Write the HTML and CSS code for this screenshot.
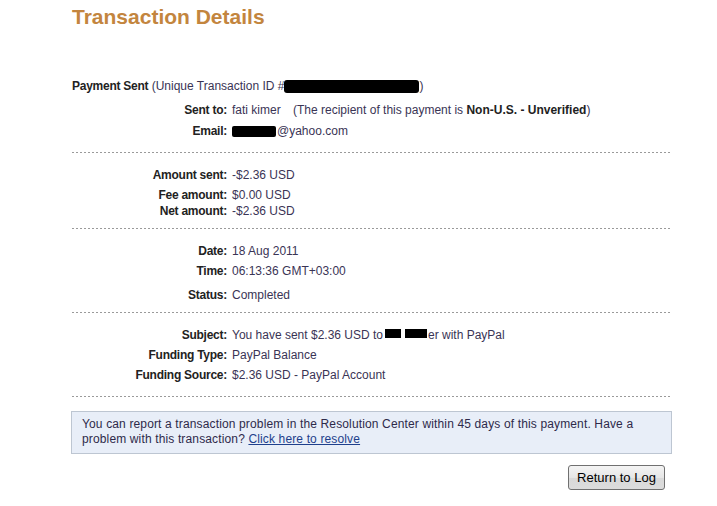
FILE: index.html
```html
<!DOCTYPE html>
<html>
<head>
<meta charset="utf-8">
<link rel="stylesheet" href="styles.css">
</head>
<body>
<div class="page">
  <h1 class="title">Transaction Details</h1>

  <div class="sent-head"><b class="lbl">Payment Sent</b> (Unique Transaction ID #<span class="redact redact-id"></span>)</div>

  <div class="grid s1">
    <div class="row r-sent"><span class="lbl">Sent to:</span><span class="val">fati kimer <span class="spacer"></span>(The recipient of this payment is <b class="strong">Non-U.S. - Unverified</b>)</span></div>
    <div class="row r-email"><span class="lbl">Email:</span><span class="val"><span class="redact redact-mail"></span>@yahoo.com</span></div>
  </div>
  <div class="divider d-13"></div>

  <div class="grid sec">
    <div class="row"><span class="lbl">Amount sent:</span><span class="val">-$2.36 USD</span></div>
    <div class="row r-4"><span class="lbl">Fee amount:</span><span class="val">$0.00 USD</span></div>
    <div class="row r-0"><span class="lbl">Net amount:</span><span class="val">-$2.36 USD</span></div>
  </div>
  <div class="divider d-9"></div>

  <div class="grid sec">
    <div class="row"><span class="lbl">Date:</span><span class="val">18 Aug 2011</span></div>
    <div class="row r-4"><span class="lbl">Time:</span><span class="val">06:13:36 GMT+03:00</span></div>
    <div class="row r-8"><span class="lbl">Status:</span><span class="val">Completed</span></div>
  </div>
  <div class="divider d-9"></div>

  <div class="grid sec">
    <div class="row"><span class="lbl">Subject:</span><span class="val">You have sent $2.36 USD to<span class="redact redact-s1"></span><span class="redact redact-s2"></span>er with PayPal</span></div>
    <div class="row r-4"><span class="lbl">Funding Type:</span><span class="val">PayPal Balance</span></div>
    <div class="row r-4"><span class="lbl">Funding Source:</span><span class="val">$2.36 USD - PayPal Account</span></div>
  </div>
  <div class="divider d-13"></div>

  <div class="notice">You can report a transaction problem in the Resolution Center within 45 days of this payment. Have a problem with this transaction? <a href="#" class="link">Click here to resolve</a></div>

  <div class="actions"><button class="btn">Return to Log</button></div>
</div>
</body>
</html>
```
FILE: styles.css
```css
html, body {
  margin: 0;
  padding: 0;
  background: #ffffff;
}
body {
  font-family: "Liberation Sans", Arial, sans-serif;
  font-size: 12px;
  color: #3a3455;
}
.page {
  margin-left: 71px;
  width: 601px;
}
.title {
  margin: 5px 0 0 1px;
  font-size: 21px;
  line-height: 24px;
  font-weight: bold;
  color: #c3853e;
}
.lbl {
  font-weight: bold;
  color: #222222;
  letter-spacing: -0.25px;
}
.strong {
  font-weight: bold;
  color: #222222;
}
.sent-head {
  margin: 49px 0 0 1px;
  line-height: 16px;
  height: 16px;
  white-space: nowrap;
}
.grid {
  display: flex;
  flex-direction: column;
}
.row {
  display: grid;
  grid-template-columns: 156px 1fr;
  column-gap: 5px;
  line-height: 16px;
  height: 16px;
  white-space: nowrap;
}
.row > .lbl {
  text-align: right;
}
.s1 .r-sent { margin-top: 8px; }
.s1 .r-email { margin-top: 5px; }
.sec { padding-top: 14px; }
.r-0 { margin-top: 0; }
.r-4 { margin-top: 4px; }
.r-8 { margin-top: 8px; }
.spacer {
  display: inline-block;
  width: 9px;
}
.divider {
  height: 1px;
  margin-left: 1px;
  background-image: repeating-linear-gradient(to right, #9a9a9a 0 2px, transparent 2px 4px);
}
.d-13 { margin-top: 13px; }
.d-9 { margin-top: 9px; }
.redact {
  display: inline-block;
  background: #000;
  vertical-align: middle;
}
.redact-id {
  width: 135px;
  height: 13px;
  border-radius: 3px;
}
.redact-mail {
  width: 44px;
  height: 11px;
  border-radius: 2px;
  margin-right: 1px;
}
.redact-s1 {
  width: 16px;
  height: 9px;
  margin-left: 2px;
  vertical-align: 1px;
}
.redact-s2 {
  width: 22px;
  height: 9px;
  margin-left: 4px;
  margin-right: 1px;
  vertical-align: 1px;
}
.notice {
  margin-top: 14px;
  padding: 5px 10px 6px 10px;
  line-height: 15px;
  letter-spacing: 0.14px;
  background: #e8eef8;
  border: 1px solid #bdc6d2;
  color: #2e2a4a;
}
.link {
  color: #1e3f8c;
  text-decoration: underline;
}
.actions {
  display: flex;
  justify-content: flex-end;
  margin-top: 11px;
  padding-right: 7px;
}
.btn {
  width: 97px;
  height: 25px;
  padding: 0;
  font-family: "Liberation Sans", Arial, sans-serif;
  font-size: 13px;
  color: #000;
  border: 1px solid #707070;
  border-radius: 3px;
  background: linear-gradient(#f4f4f4, #e6e6e6 50%, #d9d9d9 51%, #dcdcdc);
}
```
